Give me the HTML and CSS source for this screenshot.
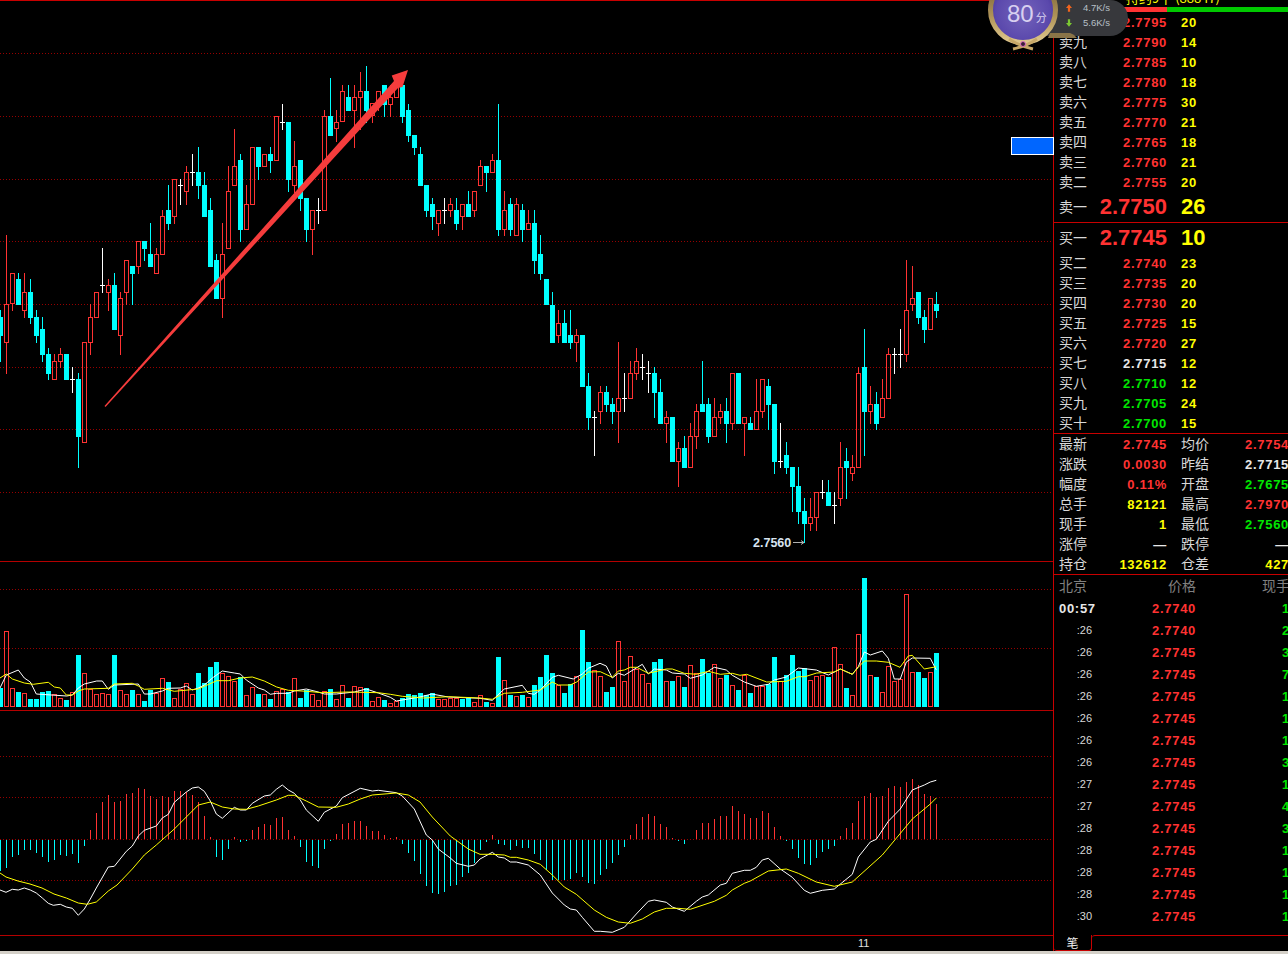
FILE: index.html
```html
<!DOCTYPE html>
<html lang="zh-CN">
  <head>
    <meta charset="UTF-8" />
    <title>分时K线</title>
    <link rel="stylesheet" href="styles.css">
  </head>
  <body>
    <div class="app">
      <div class="main">
        <div class="charts">
          <svg id="priceChart" class="pane pane-price" viewBox="0 1 1053 560"></svg>
          <div class="divider"></div>
          <svg id="volumeChart" class="pane pane-volume" viewBox="0 562 1053 148"></svg>
          <div class="divider"></div>
          <svg id="macdChart" class="pane pane-macd" viewBox="0 711 1053 224"></svg>
          <div class="axis"><span class="axis-label">11</span></div>
          <div class="jump-btn"></div>
        </div>

        <div class="panel">
          <div class="title"><span>持约9十 (88847)</span></div>
          <div class="order-bar"><div class="bar-red"></div><div class="bar-green"></div></div>

          <div id="sellBook" class="book"></div>
          <div id="buyBook" class="book book-buy"></div>
          <div id="stats" class="stats"></div>
          <div id="ticks" class="ticks"></div>

          <div class="tabs">
            <div class="tab">笔</div>
            <div class="tabs-rest"></div>
          </div>
        </div>
      </div>
      <div class="statusbar"></div>

      <div class="speed">
        <div class="speed-pill">
          <div class="speed-row">
            <svg class="speed-icon" viewBox="0 0 8 10"><path d="M4 0 8 5H5.5V10H2.5V5H0Z" fill="#f0641e"/></svg>
            <span>4.7K/s</span>
          </div>
          <div class="speed-row">
            <svg class="speed-icon" viewBox="0 0 8 10"><path d="M4 10 8 5H5.5V0H2.5V5H0Z" fill="#7cc832"/></svg>
            <span>5.6K/s</span>
          </div>
        </div>
        <svg class="medal" viewBox="0 0 94 56">
          <defs>
            <radialGradient id="medalFill" cx="50%" cy="55%" r="60%">
              <stop offset="0%" stop-color="#7464bc"/>
              <stop offset="70%" stop-color="#5a48ac"/>
              <stop offset="100%" stop-color="#3e2e90"/>
            </radialGradient>
            <linearGradient id="medalGold" x1="0" y1="0" x2="0" y2="1">
              <stop offset="0%" stop-color="#6a5430"/>
              <stop offset="60%" stop-color="#b09458"/>
              <stop offset="100%" stop-color="#e0c88e"/>
            </linearGradient>
          </defs>
          <path d="M64 33H84Q88 34 91 38H62Z" fill="#8a7448"/>
          <circle cx="37" cy="10" r="32.5" fill="url(#medalFill)" stroke="url(#medalGold)" stroke-width="5"/>
          <path d="M23 39Q33 46 47 49M51 39Q41 46 27 49" fill="none" stroke="#c8a868" stroke-width="3"/>
          <circle cx="37" cy="44" r="2.5" fill="#3a2038" stroke="#e070c0"/>
        </svg>
        <div class="score"><span class="score-num">80</span><span class="score-unit">分</span></div>
      </div>
    </div>

    <script src="script.js"></script>
  </body>
</html>
```

FILE: styles.css
```css
* {
  margin: 0;
  padding: 0;
  box-sizing: border-box;
}

html,
body {
  width: 1288px;
  height: 954px;
  overflow: hidden;
  background: #000;
}

body {
  font-family: "Liberation Sans", "Noto Sans CJK SC", sans-serif;
  color: #d8d8d8;
}

.app {
  position: relative;
  width: 1288px;
  height: 954px;
  display: flex;
  flex-direction: column;
  overflow: hidden;
}

.main {
  flex: 1;
  display: flex;
  min-height: 0;
}

.statusbar {
  height: 3px;
  background: #d4d0c8;
}

/* chart column */
.charts {
  position: relative;
  width: 1053px;
  display: flex;
  flex-direction: column;
  border-top: 1px solid #c80000;
}

.pane {
  display: block;
  flex: none;
  width: 1053px;
}

.pane-price {
  height: 560px;
}

.pane-volume {
  height: 148px;
}

.pane-macd {
  height: 224px;
}

.divider {
  flex: none;
  height: 1px;
  background: #b40000;
}

.axis {
  height: 16px;
  position: relative;
  border-top: 1px solid #b40000;
  font-size: 11px;
  color: #e0e0e0;
}

.axis-label {
  position: absolute;
  left: 858px;
  top: 1px;
}

.jump-btn {
  position: absolute;
  left: 1011px;
  top: 136px;
  width: 43px;
  height: 18px;
  background: #0066ff;
  border: 1px solid #fff;
}

/* right panel */
.panel {
  width: 235px;
  display: flex;
  flex-direction: column;
  border-left: 1px solid #c80000;
  overflow: hidden;
}

.title {
  height: 7px;
  overflow: hidden;
  padding-left: 72px;
  color: #ffff00;
  font-family: "Noto Sans CJK SC", sans-serif;
  font-size: 13px;
  line-height: 1;
}

.title span {
  display: block;
  margin-top: -9px;
  white-space: nowrap;
}

.order-bar {
  height: 5px;
  display: flex;
}

.bar-red {
  width: 113px;
  background: #ff3232;
}

.bar-green {
  flex: 1;
  background: #00c800;
}

.book {
  border-bottom: 1px solid #c80000;
}

.book-row {
  height: 20px;
  display: grid;
  grid-template-columns: 108px 1fr;
  align-items: center;
  padding: 2px 0 0 5px;
  font-size: 13px;
  font-weight: 700;
  line-height: 16px;
  letter-spacing: 0.7px;
}

.book-row-big {
  height: 30px;
  padding-top: 0;
  font-size: 22px;
  letter-spacing: 0;
}

.book-cell {
  display: flex;
  justify-content: space-between;
  align-items: center;
}

.label {
  margin-bottom: 4px;
  font-family: "Noto Sans CJK SC", sans-serif;
  font-size: 14px;
  font-weight: 400;
  line-height: 14px;
  letter-spacing: 0;
  color: #d8d8d8;
}

.book-row-big .label {
  margin-bottom: 2px;
}

.vol {
  padding-left: 14px;
  color: #ffff00;
}

.stats {
  border-bottom: 1px solid #c80000;
}

.stat-row {
  height: 20px;
  display: grid;
  grid-template-columns: 122px 108px;
  align-items: center;
  padding: 2px 0 0 5px;
  font-size: 13px;
  font-weight: 700;
  line-height: 16px;
  letter-spacing: 0.7px;
}

.stat-cell {
  display: flex;
  justify-content: space-between;
  align-items: center;
  white-space: nowrap;
}

.stat-cell:first-child {
  padding-right: 14px;
}

.ticks {
  flex: 1;
}

.tick-row {
  height: 22px;
  display: grid;
  grid-template-columns: 33px 104px 1fr;
  align-items: center;
  padding-left: 5px;
  font-size: 13px;
  font-weight: 700;
  letter-spacing: 0.7px;
}

.tick-head {
  color: #808080;
}

.tick-head .label {
  margin-bottom: 2px;
  color: #808080;
}

.tick-time {
  text-align: right;
  font-size: 11px;
  font-weight: 400;
  letter-spacing: 0;
  color: #d8d8d8;
}

.tick-time-full {
  text-align: left;
  font-size: 13px;
  font-weight: 700;
  letter-spacing: 0.7px;
  color: #e8e8e8;
  white-space: nowrap;
}

.tick-price {
  text-align: right;
}

.tick-vol {
  padding-left: 86px;
  white-space: nowrap;
}

.tick-head .tick-vol {
  padding-left: 66px;
}

.tabs {
  height: 16px;
  display: flex;
}

.tab {
  width: 38px;
  height: 16px;
  border-right: 1px solid #c80000;
  border-bottom: 1px solid #c80000;
  border-bottom-left-radius: 3px;
  border-bottom-right-radius: 3px;
  font-family: "Noto Sans CJK SC", sans-serif;
  font-size: 12px;
  line-height: 15px;
  text-align: center;
  color: #f0f0f0;
}

.tabs-rest {
  flex: 1;
  border-top: 1px solid #c80000;
  border-top-left-radius: 3px;
}

.red { color: #ff3232; }
.green { color: #00e600; }
.white { color: #e8e8e8; }
.yellow { color: #ffff00; }

/* network speed widget, sits over the chart and the panel */
.speed {
  position: absolute;
  left: 986px;
  top: 0;
  width: 144px;
  height: 56px;
}

.speed-pill {
  position: absolute;
  left: 60px;
  top: 0;
  width: 82px;
  height: 36px;
  padding-left: 20px;
  background: #37383c;
  border-radius: 0 18px 18px 0;
  font-size: 9.5px;
  color: #b8c0c8;
}

.speed-row {
  height: 15px;
  display: flex;
  align-items: center;
  gap: 11px;
}

.speed-icon {
  width: 6px;
  height: 8px;
}

.medal {
  position: absolute;
  left: 0;
  top: 0;
  width: 94px;
  height: 56px;
}

.score {
  position: absolute;
  left: 21px;
  top: 0;
  height: 28px;
  display: flex;
  align-items: baseline;
  color: #d8d0f0;
  line-height: 28px;
}

.score-num {
  font-size: 24px;
}

.score-unit {
  margin-left: 2px;
  font-family: "Noto Sans CJK SC", sans-serif;
  font-size: 11px;
}
```

FILE: script.js
```js
// candles: type, high, body top, body bottom, low (page pixels). x = 6 * index
const candles = [
  ["c",310,317,336,362],["r",235,304,343,374],["r",273,273,304,311],["c",273,279,305,305],
  ["r",273,292,311,318],["c",279,292,318,324],["c",310,317,336,343],["c",317,329,355,362],
  ["c",348,354,374,380],["r",354,361,380,380],["r",348,354,362,368],["c",354,354,380,380],
  ["w",367,379,379,393],["c",373,379,437,468],["r",342,342,443,443],["r",304,317,343,355],
  ["r",292,292,318,318],["w",248,285,285,293],["r",279,285,293,311],["c",273,285,330,330],
  ["r",292,298,336,355],["r",260,260,293,305],["c",266,266,274,305],["r",241,241,267,274],
  ["c",241,241,249,261],["c",223,254,267,267],["r",248,254,274,274],["r",210,216,255,255],
  ["c",185,210,224,230],["r",179,179,217,224],["w",179,185,185,205],["r",166,172,192,205],
  ["w",154,172,172,186],["c",147,172,186,199],["c",172,185,217,217],["c",198,210,267,267],
  ["c",254,260,299,299],["r",223,254,299,318],["r",166,191,249,249],["r",129,166,186,186],
  ["c",154,160,230,242],["r",185,204,230,230],["r",147,147,205,205],["c",147,147,167,180],
  ["r",154,154,167,167],["c",147,154,161,173],["r",116,116,161,161],["w",104,122,122,130],
  ["c",122,122,180,192],["r",141,166,186,193],["c",160,160,199,211],["c",198,198,230,242],
  ["r",210,210,230,255],["w",198,210,210,224],["r",110,116,211,211],["c",78,116,136,136],
  ["r",110,122,129,142],["r",85,91,122,122],["c",85,97,111,111],["r",85,97,111,148],
  ["r",72,91,98,130],["c",66,91,111,123],["r",103,103,116,123],["r",91,91,103,111],
  ["c",85,85,105,117],["r",85,97,105,117],["r",85,85,98,98],["c",85,85,117,123],
  ["c",104,110,136,142],["c",135,135,148,155],["c",147,154,186,186],["c",185,185,211,217],
  ["c",198,204,217,230],["r",210,210,224,236],["w",198,210,210,224],["r",198,204,211,217],
  ["c",198,210,224,230],["r",204,204,217,230],["c",191,204,217,217],["r",191,191,211,217],
  ["r",160,166,186,186],["c",166,166,173,192],["r",154,160,173,173],["c",104,160,230,236],
  ["r",191,210,230,236],["c",198,204,230,236],["r",198,204,236,236],["c",204,210,230,242],
  ["r",210,223,230,230],["c",210,223,261,274],["c",235,254,274,280],["c",279,279,305,305],
  ["c",292,305,343,343],["r",310,323,336,343],["c",310,323,343,343],["c",310,335,343,349],
  ["r",329,335,343,362],["c",335,335,387,387],["c",373,386,418,430],["w",411,417,417,456],
  ["r",386,392,412,424],["c",386,392,405,412],["c",398,404,412,424],["r",342,398,412,443],
  ["w",373,398,398,412],["r",361,373,399,399],["r",348,361,374,380],["w",354,367,367,380],
  ["w",361,373,373,393],["c",367,373,393,418],["c",379,392,424,424],["r",411,417,424,443],
  ["c",417,417,462,462],["r",442,448,462,487],["c",436,448,468,468],["r",423,436,468,468],
  ["r",404,411,437,449],["c",361,404,412,412],["c",398,404,437,443],["r",398,417,437,437],
  ["r",404,411,418,424],["c",398,411,424,443],["r",373,373,424,430],["c",373,373,424,424],
  ["r",417,417,424,456],["c",417,423,430,430],["r",379,411,430,430],["r",379,379,412,418],
  ["c",379,386,405,430],["c",404,404,462,474],["w",423,461,461,468],["c",442,455,468,474],
  ["c",467,467,487,512],["c",467,486,512,524],["c",498,511,524,543],["r",498,517,524,531],
  ["r",492,492,518,531],["w",480,492,492,499],["c",480,492,506,506],["w",492,505,505,524],
  ["r",442,467,499,506],["c",448,461,468,499],["r",455,467,474,481],["r",367,373,468,468],
  ["c",329,367,412,456],["r",386,404,412,424],["c",392,404,424,430],["r",379,398,418,418],
  ["r",348,354,399,399],["w",348,354,354,374],["w",329,354,354,368],["r",260,310,355,362],
  ["r",266,298,305,311],["c",292,292,318,324],["c",310,317,330,343],["r",298,298,330,330],
  ["c",292,304,311,318]
];

// volume bars: top edge as read from the 3x crop, y = 560 + v / 3
const volumes = ("c384 r213 r384 c396 r399 c417 c417 c396 c393 r402 r414 c420 r396 c285 r339 r387 r402 r399 r402 c285 " +
  "r390 r402 c390 r402 c423 c390 r399 r354 c366 r414 r387 r369 r402 c339 c369 c321 c306 r339 r348 r363 " +
  "c351 r405 r381 c402 r402 c417 r393 r387 c396 r354 c414 c390 r402 r420 r393 c387 r417 r375 c414 r378 " +
  "r381 c384 r423 r411 c420 r429 r423 c414 c402 c405 c399 c405 c399 r417 r417 r414 r414 c417 c414 r426 " +
  "r405 c426 r429 c291 r361 c405 r408 c405 r411 c375 c351 c285 c339 r375 c399 c372 r348 c210 c306 r330 " +
  "r348 c396 c381 r243 r363 r288 r327 r342 r369 c306 c297 r363 c363 r348 c381 r315 r339 c297 c339 r312 " +
  "r354 c345 r375 c390 r345 c399 r378 r378 c372 c291 r363 c345 c285 c333 c324 r360 r348 r345 c351 r261 " +
  "r312 c384 r405 r222 c54 r345 c351 r396 r318 r363 r357 r102 r336 c336 c354 r336 c279").split(" ");

// macd histogram ends, y = 760 + v / 3, zero line at 238
const macd = [333,324,291,285,270,270,279,291,306,300,285,288,282,309,258,210,159,126,105,126,
  123,102,99,84,87,108,117,108,111,93,93,96,105,126,168,231,291,300,267,231,
  246,243,210,201,192,195,174,171,210,228,261,306,318,324,267,240,222,192,189,183,
  183,198,213,213,225,234,231,252,279,303,342,378,399,402,396,378,375,351,339,309,
  270,246,225,252,255,270,258,264,264,282,300,330,360,360,360,357,339,351,369,372,
  345,327,309,285,261,225,192,171,162,168,192,201,235,240,252,237,210,189,189,177,
  168,168,138,153,162,174,174,153,159,201,228,243,267,294,312,315,294,276,267,258,
  228,204,189,123,108,99,111,108,84,78,81,66,57,75,102,108,132];

// line charts, [x, y] pairs read from 3x crops
const lines = {
  volWhiteA: [0,384,19,345,55,330,73,354,91,366,109,402,200,408,217,405,235,384,253,372,290,363,307,363,325,388,343,375,415,372,433,402,451,402,487,393,505,385,541,384,559,378,577,390,595,384,613,375,640,352,667,333,703,339,721,342,739,360,775,384,793,390,811,403,829,400,865,400,883,393,919,387,955,396,973,402,1009,402,1063,396,1099,387,1135,399,1171,412,1189,423,1225,417,1260,411,1295,402,1345,411,1440,415],
  volWhiteB: [0,415,37,421,73,387,127,376,145,400,163,403,181,390,217,352,235,346,280,357,307,342,325,325,360,310,379,318,397,354,415,340,433,346,487,313,505,342,523,327,559,330,577,339,613,342,631,355,667,345,703,322,739,330,757,346,793,366,829,379,865,373,883,360,919,351,955,324,1009,330,1045,345,1081,327,1117,343,1135,320,1153,276,1171,285,1207,273,1225,295,1243,357,1261,357,1279,306,1297,294,1351,295,1369,330],
  volYellowA: [0,354,19,342,37,357,73,369,100,373,145,367,163,381,181,384,199,405,217,405,235,393,253,387,325,385,343,372,397,370,415,378,433,388,487,385,523,394,595,387,650,362,685,362,720,354,757,351,793,363,830,381,865,391,920,394,965,398,1045,396,1135,398,1171,403,1207,409,1270,414,1345,410,1440,414],
  volYellowB: [0,414,37,418,73,400,127,397,181,390,217,366,235,375,270,375,290,366,325,336,361,335,397,352,415,333,433,330,451,322,470,322,505,340,559,327,577,327,613,340,649,343,685,334,721,343,757,340,780,346,800,343,860,366,919,364,955,350,975,350,1010,339,1063,336,1081,327,1117,343,1135,322,1153,303,1189,303,1225,307,1260,322,1285,288,1297,286,1333,327,1369,320],
  macdWhiteA: [0,390,18,397,37,388,55,390,73,384,91,390,109,399,127,414,145,430,160,436,181,433,199,441,217,445,235,466,253,447,271,417,289,384,325,321,343,319,379,274,397,258,415,228,433,211,469,198,487,174,505,163,523,127,559,96,577,84,595,81,613,94,631,123,649,162,667,175,703,142,721,150,739,150,757,130,793,108,811,105,829,88,847,75,865,90,883,100,901,120,919,150,955,184,973,157,1009,138,1027,113,1081,85,1117,93,1135,91,1189,98,1207,108,1243,147,1279,225,1297,240,1315,267,1351,294,1369,310,1405,319,1423,315,1440,297],
  macdWhiteB: [0,297,37,277,55,291,73,294,91,306,109,306,145,315,181,345,217,399,253,435,271,447,289,450,307,472,343,514,361,514,397,517,433,502,469,462,505,424,523,420,559,427,577,441,613,454,649,424,667,411,685,405,721,375,739,370,757,340,793,331,811,331,829,322,847,300,865,295,901,327,937,352,973,391,991,400,1027,391,1063,387,1117,343,1135,291,1171,246,1189,238,1225,184,1261,147,1297,90,1333,75,1351,66,1369,61],
  macdYellowA: [0,339,18,351,54,363,90,372,126,384,162,402,199,414,235,429,262,433,289,426,325,393,351,375,397,327,433,285,469,255,523,207,559,171,595,135,631,126,667,141,703,147,739,148,775,138,829,120,865,106,883,106,919,123,955,141,1009,142,1045,132,1081,117,1117,105,1189,99,1225,105,1260,126,1297,171,1351,228,1405,267,1440,283],
  macdYellowB: [0,283,37,283,73,285,91,292,109,292,145,300,181,313,217,345,253,381,289,403,343,450,379,472,415,486,451,490,487,477,523,456,559,445,595,445,631,448,703,424,739,406,757,390,793,370,811,363,865,333,919,327,955,340,1009,366,1063,379,1117,366,1207,285,1297,177,1351,132,1369,114]
};

const RED = "#ff3232";
const CYAN = "#00ffff";
const WHITE = "#ffffff";
const SVG_NS = "http://www.w3.org/2000/svg";

function add(svg, tag, attrs) {
  const el = document.createElementNS(SVG_NS, tag);
  for (const key in attrs) el.setAttribute(key, attrs[key]);
  svg.appendChild(el);
  return el;
}

function fillRect(svg, x, y, w, h, color) {
  add(svg, "rect", { x, y, width: w, height: h, fill: color, "shape-rendering": "crispEdges" });
}

function hollowRect(svg, x, y, w, h, color) {
  add(svg, "rect", {
    x: x + 0.5, y: y + 0.5, width: w - 1, height: h - 1,
    fill: "none", stroke: color, "shape-rendering": "crispEdges"
  });
}

function gridLines(svg, ys) {
  ys.forEach((y) => {
    add(svg, "line", {
      x1: 0, x2: 1053, y1: y + 0.5, y2: y + 0.5,
      stroke: "#960000", "stroke-dasharray": "1 2", "shape-rendering": "crispEdges"
    });
  });
}

function polyline(svg, pts, xOff, yOff, color) {
  let out = "";
  for (let i = 0; i < pts.length; i += 2) {
    out += (xOff + pts[i] / 3).toFixed(1) + "," + (yOff + pts[i + 1] / 3).toFixed(1) + " ";
  }
  add(svg, "polyline", { points: out, fill: "none", stroke: color, "stroke-width": 1 });
}

function drawPrice() {
  const svg = document.getElementById("priceChart");
  gridLines(svg, [53, 116, 179, 241, 304, 367, 429, 492]);

  candles.forEach((c, i) => {
    const [type, high, top, bottom, low] = c;
    const x = 6 * i;
    if (type === "w") {
      fillRect(svg, x, high, 1, low - high, WHITE);
      fillRect(svg, x - 2, top, 5, 1, WHITE);
      return;
    }
    const color = type === "r" ? RED : CYAN;
    if (high < top) fillRect(svg, x, high, 1, top - high, color);
    if (low > bottom) fillRect(svg, x, bottom, 1, low - bottom, color);
    if (type === "r") hollowRect(svg, x - 2, top, 5, bottom - top, color);
    else fillRect(svg, x - 2, top, 5, bottom - top, color);
  });

  // hand drawn trend arrow
  add(svg, "polygon", {
    points: "104.5,406 394,81 391.7,75.5 408,70 402.5,87 398,88 105.5,407",
    fill: "#f53c3c"
  });

  const label = add(svg, "text", {
    x: 753, y: 547, fill: "#d8e4f0", "font-size": 12.5, "font-weight": 700
  });
  label.textContent = "2.7560";
  add(svg, "path", { d: "M793 542.5H804M801 540.5 804 542.5 801 544.5", fill: "none", stroke: "#b0b0b0" });
}

function drawVolume() {
  const svg = document.getElementById("volumeChart");
  gridLines(svg, [589, 648]);
  volumes.forEach((v, i) => {
    const top = Math.round(560 + Number(v.slice(1)) / 3);
    const x = 6 * i - 2;
    if (v[0] === "r") hollowRect(svg, x, top, 5, 707 - top, RED);
    else fillRect(svg, x, top, 5, 707 - top, CYAN);
  });
  polyline(svg, lines.volWhiteA, 0, 560, WHITE);
  polyline(svg, lines.volWhiteB, 480, 560, WHITE);
  polyline(svg, lines.volYellowA, 0, 560, "#ffff00");
  polyline(svg, lines.volYellowB, 480, 560, "#ffff00");
}

function drawMacd() {
  const svg = document.getElementById("macdChart");
  gridLines(svg, [756, 797, 839, 880]);
  macd.forEach((v, i) => {
    const end = Math.round(760 + v / 3);
    if (v < 238) fillRect(svg, 6 * i, end, 1, 839 - end, RED);
    else fillRect(svg, 6 * i, 840, 1, Math.max(end - 840, 1), CYAN);
  });
  polyline(svg, lines.macdWhiteA, 0, 760, WHITE);
  polyline(svg, lines.macdWhiteB, 480, 760, WHITE);
  polyline(svg, lines.macdYellowA, 0, 760, "#ffff00");
  polyline(svg, lines.macdYellowB, 480, 760, "#ffff00");
}

function bookRow(name, price, vol, priceClass, big) {
  return `<div class="book-row${big ? " book-row-big" : ""}">
    <div class="book-cell"><span class="label">${name}</span><span class="${priceClass}">${price}</span></div>
    <span class="vol">${vol}</span>
  </div>`;
}

function renderBook() {
  const sell = [["卖十","2.7795","20"],["卖九","2.7790","14"],["卖八","2.7785","10"],["卖七","2.7780","18"],
    ["卖六","2.7775","30"],["卖五","2.7770","21"],["卖四","2.7765","18"],["卖三","2.7760","21"],["卖二","2.7755","20"]];
  const buy = [["买二","2.7740","23","red"],["买三","2.7735","20","red"],["买四","2.7730","20","red"],
    ["买五","2.7725","15","red"],["买六","2.7720","27","red"],["买七","2.7715","12","white"],
    ["买八","2.7710","12","green"],["买九","2.7705","24","green"],["买十","2.7700","15","green"]];

  document.getElementById("sellBook").innerHTML =
    sell.map((r) => bookRow(r[0], r[1], r[2], "red")).join("") +
    bookRow("卖一", "2.7750", "26", "red", true);
  document.getElementById("buyBook").innerHTML =
    bookRow("买一", "2.7745", "10", "red", true) +
    buy.map((r) => bookRow(r[0], r[1], r[2], r[3])).join("");
}

function renderStats() {
  const rows = [
    ["最新","2.7745","red","均价","2.7754","red"],
    ["涨跌","0.0030","red","昨结","2.7715","white"],
    ["幅度","0.11%","red","开盘","2.7675","green"],
    ["总手","82121","yellow","最高","2.7970","red"],
    ["现手","1","yellow","最低","2.7560","green"],
    ["涨停","—","white","跌停","—","white"],
    ["持仓","132612","yellow","仓差","427","yellow"]
  ];
  document.getElementById("stats").innerHTML = rows.map((r) => `<div class="stat-row">
    <div class="stat-cell"><span class="label">${r[0]}</span><span class="${r[2]}">${r[1]}</span></div>
    <div class="stat-cell"><span class="label">${r[3]}</span><span class="${r[5]}">${r[4]}</span></div>
  </div>`).join("");
}

function renderTicks() {
  const rows = [["00:57","2.7740","1"],[":26","2.7740","2"],[":26","2.7745","3"],[":26","2.7745","7"],
    [":26","2.7745","1"],[":26","2.7745","1"],[":26","2.7745","1"],[":26","2.7745","3"],
    [":27","2.7745","1"],[":27","2.7745","4"],[":28","2.7745","3"],[":28","2.7745","1"],
    [":28","2.7745","1"],[":28","2.7745","1"],[":30","2.7745","1"]];
  const head = `<div class="tick-row tick-head">
    <span class="label">北京</span>
    <span class="tick-price label">价格</span>
    <span class="tick-vol label">现手</span>
  </div>`;
  document.getElementById("ticks").innerHTML = head + rows.map((r, i) => `<div class="tick-row">
    <span class="tick-time${i === 0 ? " tick-time-full" : ""}">${r[0]}</span>
    <span class="tick-price red">${r[1]}</span>
    <span class="tick-vol green">${r[2]}</span>
  </div>`).join("");
}

drawPrice();
drawVolume();
drawMacd();
renderBook();
renderStats();
renderTicks();
```
